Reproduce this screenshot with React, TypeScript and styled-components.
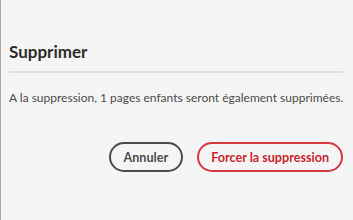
import { createGlobalStyle, styled } from "styled-components";

const Global = createGlobalStyle`
  html, body {
    margin: 0;
    padding: 0;
    background: #f5f5f5;
  }
`;

const Dialog = styled.div`
  box-sizing: border-box;
  width: 353px;
  height: 220px;
  background: #f5f5f5;
  border-left: 1px solid #a8a8a8;
  padding: 41px 10px 0 8px;
  font-family: Lato, "Liberation Sans", sans-serif;
  display: flex;
  flex-direction: column;
`;

const Heading = styled.h2`
  margin: 0;
  font-size: 17px;
  font-weight: 700;
  line-height: 22px;
  color: #2c2c2c;
`;

const Divider = styled.hr`
  border: none;
  height: 2px;
  background: #e1e1e1;
  margin: 8px 0 16px;
`;

const Body = styled.p`
  margin: 0;
  font-size: 12px;
  line-height: 18px;
  color: #4b4b4b;
  white-space: nowrap;
`;

const Actions = styled.div`
  display: flex;
  justify-content: flex-end;
  gap: 14px;
  margin-top: 35px;
`;

const Button = styled.button<{ $variant?: "negative" }>`
  box-sizing: border-box;
  height: 30px;
  padding: 0 ${(p) => (p.$variant === "negative" ? "12px" : "13px")};
  border-radius: 16px;
  border: 2px solid ${(p) => (p.$variant === "negative" ? "#d7373f" : "#4b4b4b")};
  background: transparent;
  color: ${(p) => (p.$variant === "negative" ? "#c9252d" : "#4b4b4b")};
  font-family: Lato, "Liberation Sans", sans-serif;
  font-size: 12.6px;
  font-weight: 700;
  cursor: pointer;
`;

export default function App() {
  return (
    <>
      <Global />
      <Dialog>
        <Heading>Supprimer</Heading>
        <Divider />
        <Body>A la suppression, 1 pages enfants seront également supprimées.</Body>
        <Actions>
          <Button>Annuler</Button>
          <Button $variant="negative">Forcer la suppression</Button>
        </Actions>
      </Dialog>
    </>
  );
}
